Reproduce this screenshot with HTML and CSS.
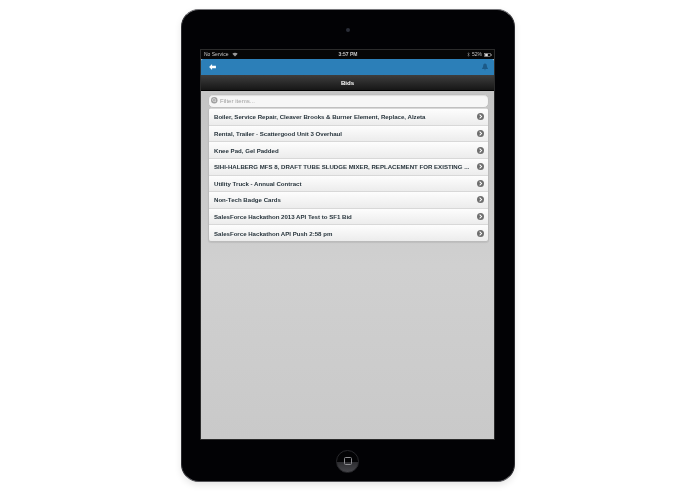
FILE: index.html
```html
<!DOCTYPE html>
<html lang="en">
<head>
<meta charset="utf-8">
<title>Bids</title>
<link rel="stylesheet" href="styles.css">
</head>
<body>
<div class="stage">
  <div class="device">
    <div class="camera"></div>
    <div class="screen">
      <div class="status">
        <div class="status-left"><span>No Service</span>
          <svg class="wifi" viewBox="0 0 10 8"><path d="M5 7.500 0.500 2.800C3 .4 7 .4 9.500 2.800Z" fill="#999"/></svg>
        </div>
        <div class="status-mid">3:57 PM</div>
        <div class="status-right">
          <svg class="bt" viewBox="0 0 4 8"><path d="M.5 2 3.300 5.500 2 7V1L3.300 2.500.5 6" fill="none" stroke="#aaa" stroke-width=".6"/></svg>
          <span>52%</span>
          <svg class="battery" viewBox="0 0 11 6"><rect x=".5" y=".5" width="9" height="5" fill="none" stroke="#ccc" stroke-width=".7"/><rect x="1.200" y="1.200" width="4" height="3.600" fill="#ddd"/><rect x="10" y="2" width="1" height="2" fill="#ccc"/></svg>
        </div>
      </div>
      <div class="topbar">
        <svg class="back" viewBox="0 0 8 7"><path d="M0 3.500 3.500 0V2H8V5H3.500V7Z" fill="#fff"/></svg>
        <svg class="bell" viewBox="0 0 7 8"><path d="M3.500 0C5 0 5.600 1.200 5.600 2.600 5.600 4.600 7 5.400 7 6.200H0C0 5.400 1.400 4.600 1.400 2.600 1.400 1.200 2 0 3.500 0ZM2.600 6.800H4.400C4.400 8 2.600 8 2.600 6.800Z" fill="#1c5a88"/></svg>
      </div>
      <div class="titlebar">Bids</div>
      <div class="content">
        <div class="filter">
          <svg class="search" viewBox="0 0 8 8"><circle cx="4" cy="4" r="4" fill="#a0a0a0"/><circle cx="3.700" cy="3.700" r="1.800" fill="none" stroke="#eee" stroke-width=".8"/><path d="M5 5 6.300 6.300" stroke="#eee" stroke-width=".8"/></svg>
          <span>Filter items...</span>
        </div>
        <ul class="list">
          <li class="row"><span class="label">Boiler, Service Repair, Cleaver Brooks &amp; Burner Element, Replace, Alzeta</span><svg class="chev" viewBox="0 0 8 8"><circle cx="4" cy="4" r="4" fill="#6e6e6e"/><path d="M3 1.800 5.200 4 3 6.200" fill="none" stroke="#fff" stroke-width="1.200"/></svg></li>
          <li class="row"><span class="label">Rental, Trailer - Scattergood Unit 3 Overhaul</span><svg class="chev" viewBox="0 0 8 8"><circle cx="4" cy="4" r="4" fill="#6e6e6e"/><path d="M3 1.800 5.200 4 3 6.200" fill="none" stroke="#fff" stroke-width="1.200"/></svg></li>
          <li class="row"><span class="label">Knee Pad, Gel Padded</span><svg class="chev" viewBox="0 0 8 8"><circle cx="4" cy="4" r="4" fill="#6e6e6e"/><path d="M3 1.800 5.200 4 3 6.200" fill="none" stroke="#fff" stroke-width="1.200"/></svg></li>
          <li class="row"><span class="label">SIHI-HALBERG MFS 8, DRAFT TUBE SLUDGE MIXER, REPLACEMENT FOR EXISTING ...</span><svg class="chev" viewBox="0 0 8 8"><circle cx="4" cy="4" r="4" fill="#6e6e6e"/><path d="M3 1.800 5.200 4 3 6.200" fill="none" stroke="#fff" stroke-width="1.200"/></svg></li>
          <li class="row"><span class="label">Utility Truck - Annual Contract</span><svg class="chev" viewBox="0 0 8 8"><circle cx="4" cy="4" r="4" fill="#6e6e6e"/><path d="M3 1.800 5.200 4 3 6.200" fill="none" stroke="#fff" stroke-width="1.200"/></svg></li>
          <li class="row"><span class="label">Non-Tech Badge Cards</span><svg class="chev" viewBox="0 0 8 8"><circle cx="4" cy="4" r="4" fill="#6e6e6e"/><path d="M3 1.800 5.200 4 3 6.200" fill="none" stroke="#fff" stroke-width="1.200"/></svg></li>
          <li class="row"><span class="label">SalesForce Hackathon 2013 API Test to SF1 Bid</span><svg class="chev" viewBox="0 0 8 8"><circle cx="4" cy="4" r="4" fill="#6e6e6e"/><path d="M3 1.800 5.200 4 3 6.200" fill="none" stroke="#fff" stroke-width="1.200"/></svg></li>
          <li class="row"><span class="label">SalesForce Hackathon API Push 2:58 pm</span><svg class="chev" viewBox="0 0 8 8"><circle cx="4" cy="4" r="4" fill="#6e6e6e"/><path d="M3 1.800 5.200 4 3 6.200" fill="none" stroke="#fff" stroke-width="1.200"/></svg></li>
        </ul>
      </div>
    </div>
    <div class="home"><div class="home-square"></div></div>
  </div>
</div>
</body>
</html>
```
FILE: styles.css
```css
* { box-sizing: border-box; }
html, body { margin: 0; padding: 0; background: #fff; }
body { width: 695px; height: 494px; overflow: hidden; font-family: "Liberation Sans", Arial, sans-serif; }
.stage { display: flex; justify-content: center; padding: 9px 0 0 1px; height: 494px; }
.device {
  width: 334px; height: 473px; background: #020205; border-radius: 18px;
  border: 1px solid #2c2c30; border-top-color: #77777b; border-bottom-color: #55555a;
  box-shadow: 0 3px 7px rgba(0,0,0,.1);
  display: flex; flex-direction: column; align-items: center;
  filter: blur(.2px);
}
.camera { width: 4px; height: 4px; border-radius: 50%; background: #2a2d38; margin: 18px 1px 0 0; }
.screen {
  width: 293px; height: 389px; margin: 18px 1px 0 0; display: flex; flex-direction: column;
  outline: 1px solid #2b2b2b; background: #ccc;
}
.status {
  height: 9px; background: #060606; color: #c5c5c5; font-size: 5px; line-height: 9px;
  display: grid; grid-template-columns: 1fr auto 1fr; padding: 0 2px 0 3px;
}
.status-left { display: flex; align-items: center; gap: 4px; }
.status-mid { font-weight: bold; }
.status-right { display: flex; align-items: center; justify-content: flex-end; gap: 2px; }
.wifi { width: 6px; height: 5px; }
.bt { width: 3px; height: 5px; }
.battery { width: 8px; height: 4px; }
.topbar {
  height: 16px; background: #2c7fb8; border-radius: 2px 2px 0 0;
  display: flex; align-items: center; justify-content: space-between; padding: 0 6px 0 8px;
}
.back { width: 7px; height: 6px; }
.bell { width: 6px; height: 8px; }
.titlebar {
  height: 16px; background: linear-gradient(#3e3e3e, #161616); border-bottom: 1px solid #000;
  color: #fff; font-size: 6.1px; font-weight: bold; line-height: 15px; text-align: center;
}
.content {
  flex: 1; min-height: 0; padding: 2.5px 5.5px 0 6.5px; display: flex; flex-direction: column;
  background: linear-gradient(#c4c4c4, #d0d0d0 50%, #c9c9c9);
}
.filter {
  height: 14px; background: #f6f6f6; border: 1px solid #c0c0c0; border-radius: 5px;
  display: flex; align-items: center; gap: 2.5px; padding-left: 2.5px;
  color: #a0a0a0; font-size: 6.1px; box-shadow: inset 0 1px 1px #ddd;
}
.search { width: 6.500px; height: 6.500px; }
.list {
  list-style: none; margin: .5px 0 0; padding: 0; border-radius: 3px; overflow: hidden;
  border: 1px solid #bbb; border-width: 0 1px 1px; box-shadow: 0 1px 1px rgba(0,0,0,.08);
}
.row {
  height: 16.64px; display: flex; align-items: center; justify-content: space-between; gap: 4px;
  padding: 0 4px 0 5.5px; background: linear-gradient(#fdfdfd, #ececec);
  border-top: 1px solid #d8d8d8;
}
.label {
  flex: 1; min-width: 0; white-space: nowrap;
  color: #27343c; font-size: 6.1px; font-weight: bold;
}
.chev { width: 7px; height: 7px; flex: none; }
.home {
  width: 23px; height: 23px; margin: 10.500px 1px 0 0; border-radius: 50%; border: 1px solid #26262a;
  background: linear-gradient(#030305 50%, #2c2c30 52%, #45454a);
  display: flex; align-items: center; justify-content: center;
}
.home-square { width: 8px; height: 8px; border: 1px solid #8c8c90; border-radius: 1.500px; }
```
